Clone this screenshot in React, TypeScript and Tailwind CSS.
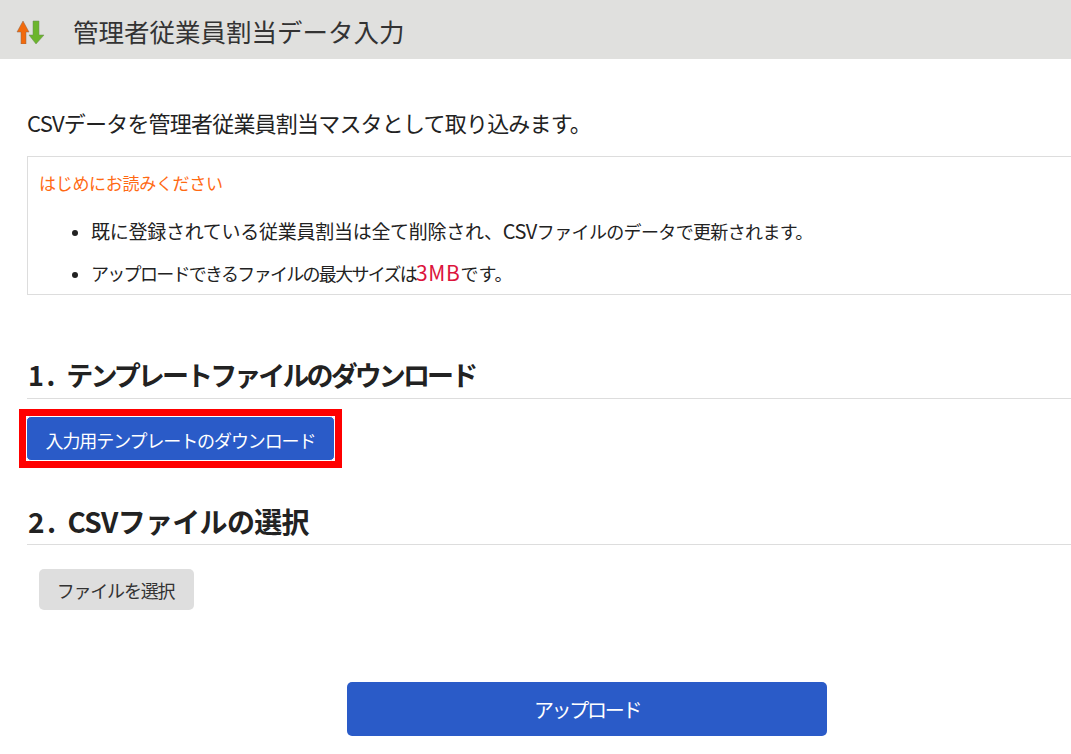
const App = () => {
  return (
    <div className="h-[754px] w-[1071px] overflow-hidden bg-white text-[#222] font-['Noto_Sans_CJK_JP',sans-serif]">
      {/* ヘッダー */}
      <div className="flex h-[59px] items-center bg-[#e0e0de] pl-[16px]">
        <svg width="29" height="28" viewBox="0 0 29 28" className="mr-[28px]">
          <path d="M7 5 L13 16 L10 16 L10 28 L5 28 L5 16 L1 16 Z" fill="#f26a0c" stroke="#8a6a50" strokeWidth="0.5" />
          <path d="M17 5 L23 5 L23 19 L28 19 L20 28 L13 19 L17 19 Z" fill="#6cb52d" stroke="#6f8a58" strokeWidth="0.5" />
        </svg>
        <h1 className="pt-[3px] text-[25.5px] font-normal leading-none text-[#333]">管理者従業員割当データ入力</h1>
      </div>

      <div className="pl-[27px]">
        <p className="mt-[48px] text-[22px] leading-[30px] tracking-[-0.8px]">CSVデータを管理者従業員割当マスタとして取り込みます。</p>

        {/* 注意事項 */}
        <div className="mt-[19px] h-[139px] border border-r-0 border-[#ddd] pl-[11px] pt-[12px]">
          <p className="text-[17px] leading-[28px] tracking-[-0.3px] text-[#ff6a13]">はじめにお読みください</p>
          <ul className="mt-[19px] list-disc pl-[52px]">
            <li className="leading-[30px]">
              <span className="text-[19px] tracking-[-0.27px]">既に登録されている従業員割当は全て削除され、</span>
              <span className="text-[20px] tracking-[-0.5px]">CSV</span>
              <span className="text-[18px] tracking-[-0.65px]">ファイルのデータで更新されます。</span>
            </li>
            <li className="mt-[10px] leading-[30px]">
              <span className="text-[18px] tracking-[-1.7px]">アップロードできるファイルの最大サイズは</span>
              <span className="text-[21px] tracking-[0.6px] text-[#dc143c]">3MB</span>
              <span className="text-[18px]">です。</span>
            </li>
          </ul>
        </div>

        <h2 className="mt-[61px] border-b border-[#ddd] pb-[4px] pl-[1px] text-[27px] font-bold leading-[38px] tracking-[-2.9px]">
          <span className="tracking-[2.5px]">1. </span>テンプレートファイルのダウンロード
        </h2>

        <div className="ml-[-8px] mt-[10px] w-[323px] border-[7px] border-[#ff0000]">
          <button className="block h-[45px] w-full rounded-[5px] border border-white bg-[#2a5bc8] pt-[3px] text-[18px] tracking-[-1.1px] text-white">入力用テンプレートのダウンロード</button>
        </div>

        <h2 className="mt-[34px] border-b border-[#ddd] pb-[4px] pl-[1px] text-[28px] font-bold leading-[38px] tracking-[-0.7px]">
          <span className="tracking-[2.5px]">2. </span>CSVファイルの選択
        </h2>

        <button className="ml-[12px] mt-[24px] block h-[41px] w-[155px] rounded-[5px] bg-[#dedede] pr-[2px] pt-[2px] text-[18px] tracking-[-1.2px] text-[#333]">ファイルを選択</button>

        <button className="ml-[320px] mt-[72px] block h-[54px] w-[480px] rounded-[5px] bg-[#2a5bc8] pt-[2px] text-[20px] tracking-[-2.3px] text-white">アップロード</button>
      </div>
    </div>
  );
};

export default App;
